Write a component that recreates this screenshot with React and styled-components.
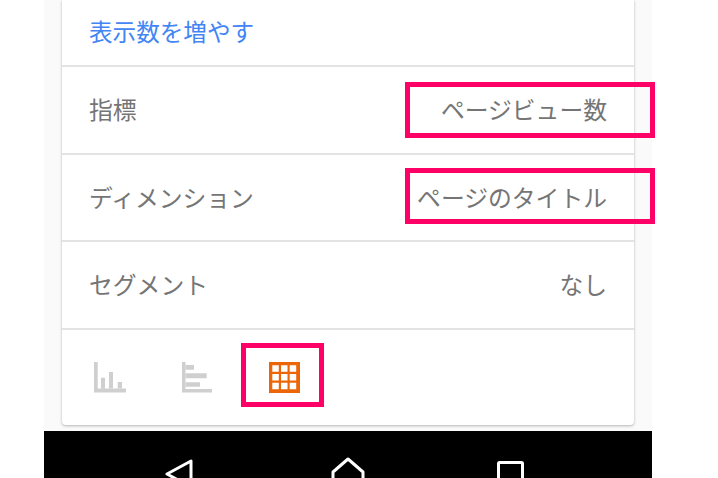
import React from 'react';
import styled, { createGlobalStyle } from 'styled-components';

const GlobalStyle = createGlobalStyle`
  html, body {
    margin: 0;
    padding: 0;
    background: #fff;
    overflow: hidden;
  }
  body {
    font-family: "Roboto", "Noto Sans CJK JP", sans-serif;
  }
`;

const Page = styled.div`
  position: relative;
  width: 718px;
  height: 478px;
  overflow: hidden;
  padding-left: 44px;
  box-sizing: border-box;
`;

const Screen = styled.div`
  width: 608px;
  height: 478px;
  background: #fafafa;
  display: flex;
  flex-direction: column;
`;

const Card = styled.div`
  height: 425px;
  margin: 0 18px 6px;
  box-sizing: border-box;
  background: #fff;
  border-radius: 0 0 4px 4px;
  box-shadow: 0 1px 3px rgba(0, 0, 0, 0.28);
  flex: none;
`;

const Row = styled.div`
  height: ${p => p.$height}px;
  box-sizing: border-box;
  display: flex;
  align-items: center;
  justify-content: space-between;
  padding: 0 27px ${p => p.$bottom}px 27px;
  border-bottom: 2px solid #e3e3e3;
  font-size: 23.8px;
  color: #757575;
`;

const MoreLink = styled.a`
  color: #4285f4;
  font-size: 23.6px;
  text-decoration: none;
`;

const ChartRow = styled.div`
  display: flex;
  align-items: center;
  height: 95px;
  padding: 1px 0 0 32px;
  box-sizing: border-box;
  gap: 56px;
`;

const ChartIcon = styled.svg`
  display: block;
  width: 32px;
  height: 32px;
  flex: none;
  margin-left: ${p => p.$nudge || 0}px;
`;

const NavBar = styled.div`
  flex: 1;
  background: #000;
  display: flex;
  align-items: flex-start;
  overflow: hidden;
`;

const NavIcon = styled.svg`
  display: block;
  flex: none;
  margin-left: ${p => p.$left}px;
  margin-top: ${p => p.$top}px;
  overflow: visible;
`;

const Highlight = styled.div`
  position: absolute;
  left: ${p => p.$left}px;
  top: ${p => p.$top}px;
  width: ${p => p.$width}px;
  height: ${p => p.$height}px;
  box-sizing: border-box;
  border: 5px solid #ff0066;
`;

const rows = [
  { label: '指標', value: 'ページビュー数', height: 88, bottom: 3 },
  { label: 'ディメンション', value: 'ページのタイトル', height: 87, bottom: 2 },
  { label: 'セグメント', value: 'なし', height: 88, bottom: 3 },
];

export default function App() {
  return (
    <>
      <GlobalStyle />
      <Page>
        <Screen>
          <Card>
            <Row $height={67} $bottom={4}>
              <MoreLink href="#">表示数を増やす</MoreLink>
            </Row>
            {rows.map(r => (
              <Row key={r.label} $height={r.height} $bottom={r.bottom}>
                <span>{r.label}</span>
                <span>{r.value}</span>
              </Row>
            ))}
            <ChartRow>
              <ChartIcon viewBox="0 0 32 32" fill="#cfcfcf">
                <path d="M0 0h3.700v26.500H32v4H0z" />
                <path d="M7 15.700h4v11H7zM15 10h4v16.500h-4zM23.700 20H28v6.500h-4.300z" />
              </ChartIcon>
              <ChartIcon viewBox="0 0 32 32" fill="#cfcfcf">
                <path d="M0 0h3.500v27H30v3.500H0z" />
                <path d="M3.500 3H12v4.700H3.500zM3.500 11.300h21.200v5H3.500zM3.500 20.300H18v4.400H3.500z" />
              </ChartIcon>
              <ChartIcon $nudge={-1} viewBox="0 0 32 32">
                <rect width="31" height="31" fill="#ec6608" />
                <path
                  fill="#fff"
                  d="M3.300 3.300h6.500v6.500H3.300zM12 3.300h6.500v6.500H12zM20.700 3.300h6.500v6.500h-6.500zM3.300 12h6.500v6.500H3.300zM12 12h6.500v6.500H12zM20.700 12h6.500v6.500h-6.500zM3.300 20.700h6.500v6.500H3.300zM12 20.700h6.500v6.500H12zM20.700 20.700h6.500v6.500h-6.500z"
                />
              </ChartIcon>
            </ChartRow>
          </Card>
          <NavBar>
            <NavIcon $left={121} $top={28} width="27" height="30" viewBox="0 0 27 30" fill="none" stroke="#fff" strokeWidth="3" strokeLinejoin="round">
              <path d="M26 2v26L2 15z" />
            </NavIcon>
            <NavIcon $left={139} $top={26} width="34" height="30" viewBox="0 0 34 30" fill="none" stroke="#fff" strokeWidth="3" strokeLinejoin="round">
              <path d="M17 2L32 15v15H2V15z" />
            </NavIcon>
            <NavIcon $left={132} $top={30} width="27" height="27" viewBox="0 0 27 27" fill="none" stroke="#fff" strokeWidth="3" strokeLinejoin="round">
              <rect x="1.500" y="1.500" width="24" height="24" rx="1" />
            </NavIcon>
          </NavBar>
        </Screen>
        <Highlight $left={405} $top={82} $width={250} $height={56} />
        <Highlight $left={405} $top={168} $width={250} $height={56} />
        <Highlight $left={241} $top={343} $width={83} $height={64} />
      </Page>
    </>
  );
}
